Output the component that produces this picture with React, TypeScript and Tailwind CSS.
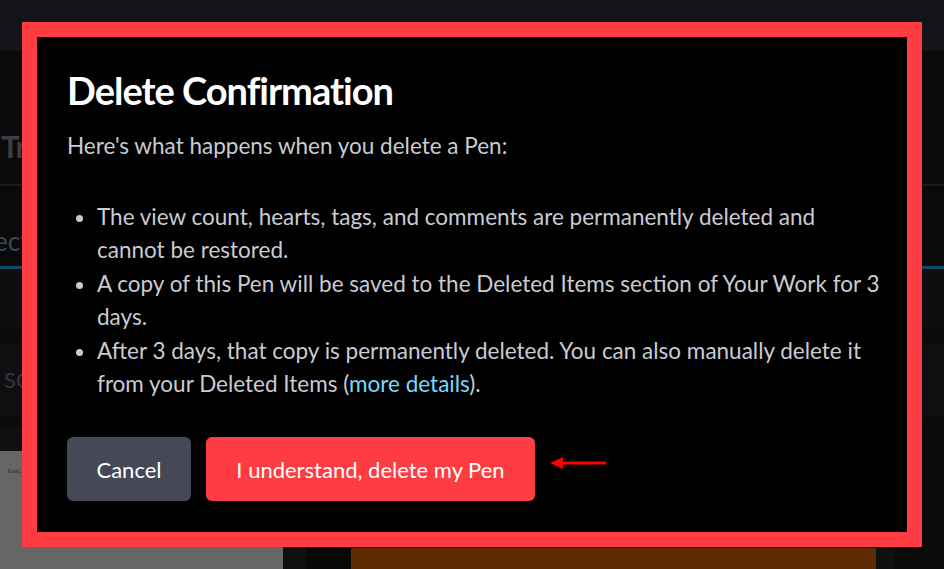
import React from "react";

export default function App() {
  return (
    <div className="relative h-[569px] w-[944px] overflow-hidden bg-[#0a0a0a]" style={{ fontFamily: "Lato, 'Noto Sans', sans-serif" }}>
      {/* background page (dimmed) */}
      <div className="flex h-full flex-col">
        <div className="h-[51px] bg-[#131417]" />
        <div className="flex h-[133px] items-end bg-[#0a0a0a] pb-[22px] pl-[1px]">
          <span className="text-[31px] font-bold leading-none tracking-[-1px] text-[#3a3d45]">Tr</span>
        </div>
        <div className="h-[2px] bg-[#1a1a1d]" />
        <div className="flex h-[80px] items-end bg-[#0a0a0a] pb-[12px]">
          <span className="-ml-[6px] text-[26px] leading-none text-[#34495a]">ect</span>
        </div>
        <div className="h-[3px] bg-[#0e4a63]" />
        <div className="h-[58px] bg-[#0e0e10]" />
        <div className="h-[16px] bg-[#0a0a0a]" />
        <div className="flex h-[74px] items-center bg-[#0f0f11] pl-[4px]">
          <span className="text-[22px] leading-none text-[#33363d]">SC</span>
        </div>
        <div className="h-[10px] bg-[#0a0a0a]" />
        <div className="flex flex-1">
          <div className="flex w-[283px] flex-col">
            <div className="h-[24px] bg-[#0f1012]" />
            <div className="flex-1 bg-[#666666] pl-[8px] pt-[4px]">
              <span className="text-[7px] text-[#222]" style={{ fontFamily: "'Liberation Serif', serif" }}>GoCo</span>
            </div>
          </div>
          <div className="w-[23px] bg-[#0f1012]" />
          <div className="w-[45px] bg-[#080808]" />
          <div className="flex w-[525px] flex-col">
            <div className="h-[121px] bg-[#0a0a0a]" />
            <div className="flex-1 bg-[#5f2b05]" />
          </div>
          <div className="w-[19px] bg-[#0f1012]" />
          <div className="flex-1 bg-[#0a0a0a]" />
        </div>
      </div>

      {/* modal */}
      <div className="absolute left-[22px] top-[22px] h-[525px] w-[900px] border-[15px] border-[#ff3c41] bg-black">
        <div className="flex flex-col pl-[30px] pr-[26px] pt-[30px]">
          <h1 className="text-[38px] font-bold leading-[46px] tracking-[-1px] text-white" style={{ fontFamily: "Lato, sans-serif" }}>
            Delete Confirmation
          </h1>
          <p className="mt-[16px] text-[22.5px] leading-[33px] text-[#c9cbd4]">
            Here's what happens when you delete a Pen:
          </p>
          <ul className="mt-[39px] list-disc pl-[30px] text-[22.5px] leading-[32.5px] text-[#c9cbd4] marker:text-[#c9cbd4]">
            <li>The view count, hearts, tags, and comments are permanently deleted and cannot be restored.</li>
            <li className="mt-[2px]">A copy of this Pen will be saved to the Deleted Items section of Your Work for 3 days.</li>
            <li className="mt-[2px]">
              After 3 days, that copy is permanently deleted. You can also manually delete it from your Deleted Items (<span className="text-[#76daff]">more details</span>).
            </li>
          </ul>
          <div className="mt-[37px] flex items-center gap-[15px]">
            <button className="flex h-[64px] w-[124px] items-center justify-center rounded-[6px] bg-[#444857] text-[22px] text-white">
              Cancel
            </button>
            <button className="flex h-[64px] w-[329px] items-center justify-center rounded-[6px] bg-[#ff3c41] text-[22px] text-white">
              I understand, delete my Pen
            </button>
            <svg width="56" height="16" viewBox="0 0 56 16" className="mb-[12px]">
              <polygon points="0,8 13,2 13,14" fill="#ff0000" />
              <rect x="12" y="6.5" width="44" height="3" fill="#ff0000" />
            </svg>
          </div>
        </div>
      </div>
    </div>
  );
}
